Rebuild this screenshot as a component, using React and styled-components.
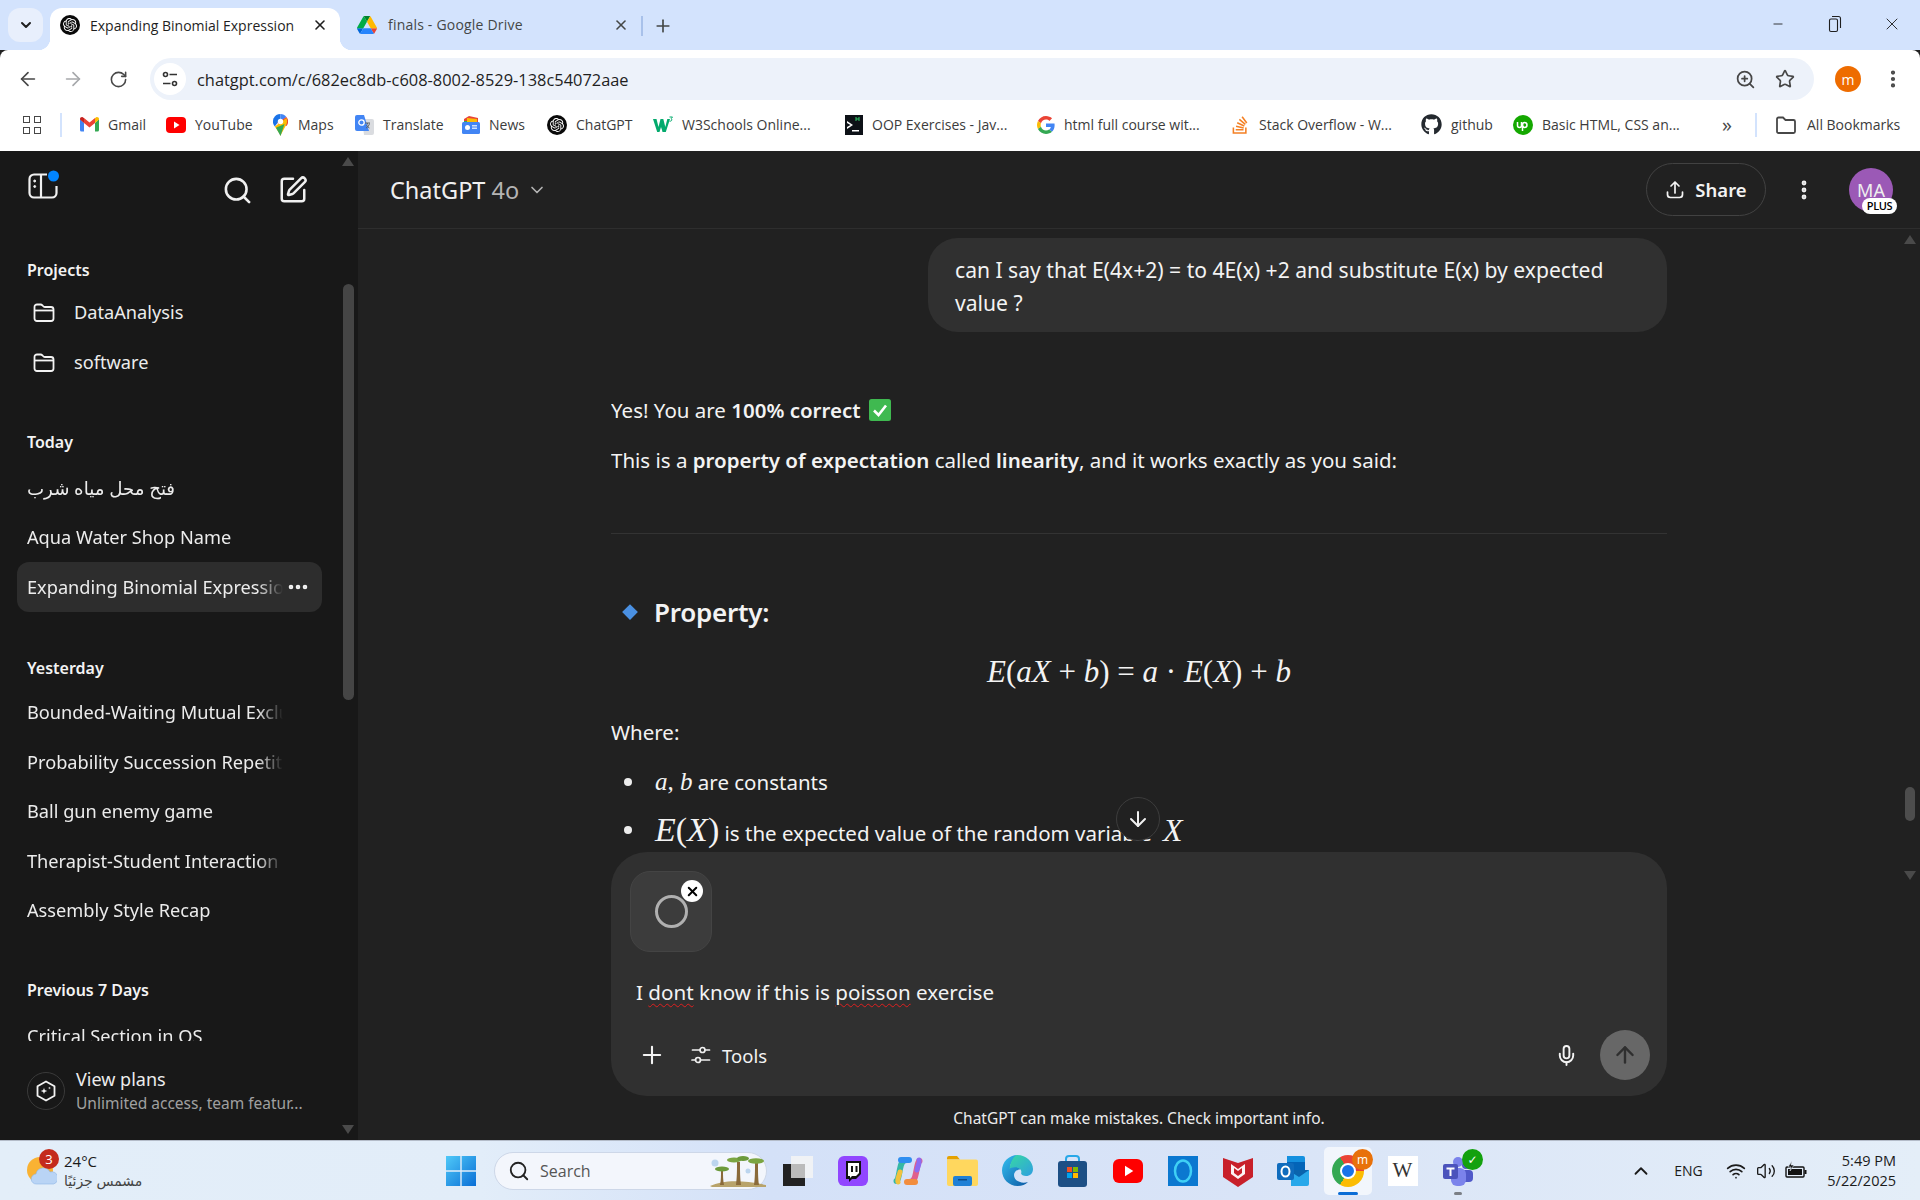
import styled, { createGlobalStyle } from "styled-components";
import {
  ArrowDown,
  ArrowLeft,
  ArrowRight,
  ArrowUp,
  ChevronDown,
  ChevronUp,
  EllipsisVertical,
  Mic,
  Minus,
  MoreHorizontal,
  Plus,
  RotateCw,
  Search,
  SquarePen,
  Star,
  Volume2,
  Wifi,
  X,
  ZoomIn,
} from "lucide-react";
import { SiOpenai } from "react-icons/si";
import { FaGithub, FaStackOverflow } from "react-icons/fa";

const Global = createGlobalStyle`
  html, body { margin: 0; padding: 0; height: 100%; background: #212121; }
  #root { height: 1200px; overflow: hidden; }
  * { box-sizing: border-box; }
`;

const UI = `"Open Sans", "DejaVu Sans", sans-serif`;
const CHAT = `"Noto Sans", "DejaVu Sans", sans-serif`;

const Page = styled.div`
  display: flex;
  flex-direction: column;
  width: 1920px;
  height: 1200px;
  font-family: ${UI};
`;

/* ---------- tab strip ---------- */
const TabStrip = styled.div`
  display: flex;
  align-items: flex-end;
  height: 50px;
  padding-left: 8px;
  background: #d3e3fd;
  color: #1f1f1f;
`;
const TabMenu = styled.div`
  display: flex;
  align-items: center;
  justify-content: center;
  width: 35px;
  height: 34px;
  margin: 0 7px 8px 0;
  border-radius: 12px;
  background: #e8effc;
`;
const Tab = styled.div`
  position: relative;
  display: flex;
  align-items: center;
  width: ${p => p.$w}px;
  height: 42px;
  padding: 0 12px 9px ${p => p.$left}px;
  border-radius: 12px 12px 0 0;
  background: ${p => (p.$active ? "#fff" : "transparent")};
  color: ${p => (p.$active ? "#1f1f1f" : "#444746")};
  ${p =>
    p.$active &&
    `
    padding-bottom: 8px;
    &::before, &::after {
      content: "";
      position: absolute;
      bottom: 0;
      width: 12px;
      height: 12px;
    }
    &::before { left: -12px; background: radial-gradient(circle at 0 0, transparent 12px, #fff 12.5px); }
    &::after { right: -12px; background: radial-gradient(circle at 100% 0, transparent 12px, #fff 12.5px); }
  `}
`;
const TabTitle = styled.span`
  flex: 1;
  margin-left: ${p => p.$gap ?? 10}px;
  font-size: 14px;
  letter-spacing: ${p => p.$track ?? 0}px;
  white-space: nowrap;
`;
const TabSep = styled.div`
  width: 2px;
  height: 20px;
  margin: 0 10px 14px 0;
  background: #a8c1ea;
`;
const NewTab = styled.div`
  display: flex;
  margin-bottom: 14px;
  color: #444746;
`;
const WindowButtons = styled.div`
  display: flex;
  margin: 0 0 14px auto;
`;
const WindowButton = styled.div`
  display: flex;
  align-items: center;
  justify-content: center;
  width: 57px;
  height: 24px;
`;

/* ---------- toolbar ---------- */
const Toolbar = styled.div`
  display: flex;
  align-items: center;
  height: 58px;
  padding-left: 5px;
  background: #fff;
  border-radius: 8px 8px 0 0;
`;
const NavButton = styled.div`
  display: flex;
  align-items: center;
  justify-content: center;
  width: 45.5px;
  color: ${p => (p.$off ? "#a6a8ab" : "#474747")};
`;
const Address = styled.div`
  display: flex;
  flex: 1;
  align-items: center;
  height: 42px;
  margin-left: 8.5px;
  padding: 0 9px 0 4px;
  border-radius: 21px;
  background: #edf2fa;
`;
const SiteInfo = styled.div`
  display: flex;
  align-items: center;
  justify-content: center;
  width: 32px;
  height: 32px;
  border-radius: 50%;
  background: #fff;
`;
const Url = styled.span`
  flex: 1;
  margin-left: 11px;
  font-size: 16.4px;
  color: #1f1f1f;
`;
const AddressAction = styled.div`
  display: flex;
  justify-content: center;
  width: 40px;
  color: #474747;
`;
const ProfileChip = styled.div`
  display: flex;
  align-items: center;
  justify-content: center;
  width: 26px;
  height: 26px;
  margin: 0 21px 0 21px;
  border-radius: 50%;
  background: #ee6c00;
  color: #fff;
  font-size: 14px;
`;
const MenuSlot = styled.div`
  display: flex;
  width: 38px;
  color: #474747;
`;

/* ---------- bookmarks ---------- */
const Bookmarks = styled.div`
  display: flex;
  align-items: center;
  height: 43px;
  padding: 0 0 10px 23px;
  background: #fff;
  color: #3c3c3c;
  font-size: 14px;
`;
const AppsIcon = styled.div`
  display: grid;
  grid-template-columns: 7px 7px;
  gap: 4px;
  width: 18px;
  span {
    height: 7px;
    border: 1.5px solid #474747;
  }
`;
const BarSep = styled.div`
  width: 2px;
  height: 24px;
  margin: ${p => p.$m};
  background: #d3e3fd;
`;
const Bookmark = styled.div`
  display: flex;
  align-items: center;
  gap: 9px;
  width: ${p => p.$w}px;
  white-space: nowrap;
`;
const BookmarkIcon = styled.span`
  display: flex;
  flex: 0 0 18px;
  align-items: center;
  justify-content: center;
`;
const More = styled.span`
  width: 37px;
  padding-left: 4px;
  font-size: 20px;
  color: #474747;
`;
const AllBookmarks = styled.div`
  display: flex;
  align-items: center;
  gap: 11px;
  white-space: nowrap;
`;

/* ---------- app ---------- */
const Main = styled.div`
  display: flex;
  height: 989px;
`;
const Sidebar = styled.aside`
  position: relative;
  display: flex;
  flex-direction: column;
  width: 358px;
  background: #181818;
  color: #ececec;
  font-family: ${CHAT};
`;
const SideTop = styled.div`
  display: flex;
  align-items: center;
  flex: 0 0 78px;
  padding: 0 50px 0 28px;
  color: #f0f0f0;
`;
const LogoSvg = styled.svg`
  margin-bottom: 8px;
  overflow: visible;
`;
const SideActions = styled.div`
  display: flex;
  gap: 25px;
  margin-left: auto;
`;
const SideNav = styled.nav`
  flex: 1;
  overflow: hidden;
`;
const SideLabel = styled.div`
  margin: ${p => p.$top}px 0 ${p => p.$bottom}px 27px;
  font-size: 16px;
  font-weight: 600;
  line-height: 24px;
  color: #f3f3f3;
`;
const SideRow = styled.div`
  display: flex;
  align-items: center;
  gap: 19px;
  height: 50px;
  padding-left: 33px;
  font-size: 18.2px;
`;
const ChatRow = styled.div`
  position: relative;
  display: flex;
  align-items: center;
  width: 305px;
  height: 49.5px;
  margin-left: 17px;
  padding-left: 10px;
  border-radius: 12px;
  background: ${p => (p.$active ? "#2d2d2d" : "transparent")};
  font-size: 18.2px;
  white-space: nowrap;
`;
const ChatTitle = styled.span`
  display: block;
  overflow: hidden;
  width: 256px;
  mask-image: linear-gradient(to right, #000 90%, transparent 100%);
`;
const RowMenu = styled.span`
  position: absolute;
  right: 12px;
  top: 13px;
  display: flex;
  color: #f5f5f5;
`;
const SideFooter = styled.div`
  display: flex;
  align-items: center;
  flex: 0 0 99px;
  gap: 11px;
  padding: 0 0 0 27px;
`;
const PlanBadge = styled.div`
  display: flex;
  align-items: center;
  justify-content: center;
  width: 38px;
  height: 38px;
  border: 1px solid #3a3a3a;
  border-radius: 50%;
`;
const PlanTitle = styled.div`
  font-size: 18px;
  line-height: 24px;
`;
const PlanSub = styled.div`
  font-size: 15.5px;
  line-height: 24px;
  color: #a0a0a0;
`;
const ScrollArrow = styled.div`
  position: absolute;
  ${p => p.$pos};
  width: 0;
  height: 0;
  border-left: 6px solid transparent;
  border-right: 6px solid transparent;
  ${p => (p.$down ? "border-top" : "border-bottom")}: 9px solid ${p => p.$color};
`;
const ScrollThumb = styled.div`
  position: absolute;
  ${p => p.$pos};
  border-radius: 6px;
  background: ${p => p.$color};
`;

const Content = styled.section`
  position: relative;
  display: flex;
  flex: 1;
  flex-direction: column;
  background: #212121;
  color: #f3f3f3;
  font-family: ${CHAT};
`;
const Header = styled.header`
  display: flex;
  align-items: center;
  flex: 0 0 78px;
  padding: 0 27px 0 32px;
  border-bottom: 1px solid #2e2e2e;
`;
const ModelName = styled.div`
  display: flex;
  align-items: center;
  gap: 8px;
  font-size: 23.5px;
  color: #f0f0f0;
  em {
    font-style: normal;
    color: #b4b4b4;
  }
`;
const ShareButton = styled.div`
  display: flex;
  align-items: center;
  justify-content: center;
  gap: 10px;
  width: 120px;
  height: 53px;
  margin-left: auto;
  border: 1px solid #424242;
  border-radius: 27px;
  font-size: 18.5px;
  font-weight: 600;
`;
const HeaderMenu = styled.div`
  display: flex;
  margin: 0 33px 0 26px;
  color: #f0f0f0;
`;
const Avatar = styled.div`
  position: relative;
  display: flex;
  align-items: center;
  justify-content: center;
  width: 44px;
  height: 44px;
  border-radius: 50%;
  background: #9b59b6;
  color: #eee;
  font-size: 18px;
`;
const PlusBadge = styled.span`
  position: absolute;
  right: -4px;
  bottom: -2px;
  display: flex;
  align-items: center;
  justify-content: center;
  width: 35px;
  height: 16px;
  border-radius: 8px;
  background: #fff;
  color: #000;
  font-size: 11px;
  font-family: ${UI};
  font-weight: 600;
  letter-spacing: -0.4px;
`;
const Column = styled.div`
  display: flex;
  flex: 1;
  flex-direction: column;
  width: 1056px;
  margin: 0 auto;
`;
const Thread = styled.div`
  display: flex;
  flex-direction: column;
  flex: 0 0 623px;
  padding-top: 9px;
  overflow: hidden;
  font-size: 20.5px;
  line-height: 33px;
  > * {
    flex-shrink: 0;
  }
`;
const Bubble = styled.div`
  align-self: flex-end;
  width: 739px;
  height: 94px;
  padding: 15px 27px 0 27px;
  border-radius: 30px;
  background: #303030;
  font-size: 21.1px;
`;
const Para = styled.p`
  margin: ${p => p.$top}px 0 0;
  b {
    font-weight: 600;
  }
`;
const CheckEmoji = styled.svg`
  margin-left: 7px;
  vertical-align: -4px;
`;
const Rule = styled.hr`
  width: 100%;
  height: 1px;
  margin: 56px 0 0;
  border: 0;
  background: #333;
`;
const Heading = styled.h3`
  display: flex;
  align-items: center;
  gap: 15px;
  margin: 60px 0 0 10px;
  font-size: 26px;
  line-height: 36px;
  font-weight: 600;
  letter-spacing: -0.25px;
`;
const Formula = styled.div`
  display: flex;
  justify-content: center;
  height: 44px;
  margin-top: 20px;
  font-size: 31px;
  line-height: 44px;
`;
const MathText = styled.span`
  margin-left: ${p => p.$ml ?? 0}px;
  font-family: "Liberation Serif", serif;
  font-style: ${p => (p.$up ? "normal" : "italic")};
  white-space: pre;
  font-size: ${p => p.$size || "inherit"};
`;
const List = styled.ul`
  margin: 16px 0 0;
  padding: 0;
  list-style: none;
`;
const Item = styled.li`
  position: relative;
  height: 33px;
  margin-bottom: 15px;
  padding-left: 44px;
  white-space: nowrap;
  &::before {
    content: "";
    position: absolute;
    left: 13px;
    top: 13px;
    width: 8px;
    height: 8px;
    border-radius: 50%;
    background: #ececec;
  }
`;
const ScrollDown = styled.div`
  position: absolute;
  left: 758px;
  top: 646px;
  display: flex;
  align-items: center;
  justify-content: center;
  width: 44px;
  height: 44px;
  border: 1px solid #3d3d3d;
  border-radius: 50%;
  background: #212121;
  color: #f0f0f0;
`;
const Composer = styled.div`
  display: flex;
  flex-direction: column;
  flex: 0 0 244px;
  padding: 19px 17px 0 19px;
  border-radius: 36px;
  background: #303030;
`;
const Attachment = styled.div`
  position: relative;
  display: flex;
  align-items: center;
  justify-content: center;
  width: 82px;
  height: 81px;
  border: 1px solid #444;
  border-radius: 20px;
  background: #3c3c3c;
`;
const Ring = styled.div`
  width: 33px;
  height: 33px;
  border: 3px solid #b0b0b0;
  border-radius: 50%;
`;
const RemoveBadge = styled.span`
  position: absolute;
  right: 8px;
  top: 8px;
  display: flex;
  align-items: center;
  justify-content: center;
  width: 22px;
  height: 22px;
  border-radius: 50%;
  background: #fff;
  color: #000;
`;
const Prompt = styled.div`
  margin: 24px 0 0 6px;
  font-size: 20.6px;
  line-height: 33px;
`;
const Typo = styled.span`
  text-decoration: underline wavy #e02020 1px;
  text-underline-offset: 3px;
`;
const ComposerBar = styled.div`
  display: flex;
  align-items: center;
  margin-top: 21px;
`;
const AddSlot = styled.div`
  display: flex;
  margin-left: 8px;
`;
const ToolsButton = styled.div`
  display: flex;
  align-items: center;
  gap: 11px;
  margin-left: 25px;
  font-size: 18.5px;
`;
const MicSlot = styled.div`
  display: flex;
  margin-left: auto;
  margin-right: 22px;
`;
const SendButton = styled.div`
  display: flex;
  align-items: center;
  justify-content: center;
  width: 50px;
  height: 50px;
  border-radius: 50%;
  background: #676767;
  color: #2f2f2f;
`;
const Disclaimer = styled.div`
  flex: 1;
  font-size: 15.5px;
  line-height: 44px;
  text-align: center;
  color: #ececec;
`;

/* ---------- taskbar ---------- */
const Taskbar = styled.footer`
  display: flex;
  align-items: center;
  height: 60px;
  border-top: 1px solid #b4bcc9;
  background: linear-gradient(90deg, #e3eef9 0%, #e2edf9 25%, #d4e1f8 40%, #d9e4f7 65%, #e4eef8 100%);
  color: #1b1b1b;
  font-family: ${UI};
`;
const Weather = styled.div`
  position: relative;
  display: flex;
  align-items: center;
  width: 434px;
  padding-left: 27px;
`;
const WeatherBadge = styled.span`
  position: absolute;
  left: 39px;
  top: -2px;
  display: flex;
  align-items: center;
  justify-content: center;
  width: 20px;
  height: 20px;
  border-radius: 50%;
  background: #c42b1c;
  color: #fff;
  font-size: 13px;
`;
const WeatherText = styled.div`
  margin-left: 7px;
  font-size: 15px;
  line-height: 20px;
  span {
    display: block;
    color: #444;
    font-size: 14px;
  }
`;
const TaskSlot = styled.div`
  position: relative;
  display: flex;
  align-items: center;
  justify-content: center;
  width: ${p => p.$w ?? 55}px;
  height: 48px;
`;
const ActiveBack = styled.div`
  position: absolute;
  left: 3.5px;
  top: 0;
  width: 48px;
  height: 48px;
  border-radius: 5px;
  background: rgba(255, 255, 255, 0.65);
`;
const TaskBar = styled.span`
  position: absolute;
  bottom: 0;
  left: 50%;
  width: ${p => p.$w}px;
  height: 3px;
  margin-left: ${p => -p.$w / 2}px;
  border-radius: 2px;
  background: ${p => p.$color};
`;
const TaskBadge = styled.span`
  position: absolute;
  right: 2px;
  top: 2px;
  display: flex;
  align-items: center;
  justify-content: center;
  width: 21px;
  height: 21px;
  border-radius: 50%;
  background: ${p => p.$color};
  color: #fff;
  font-size: 12px;
`;
const SearchPill = styled.div`
  display: flex;
  align-items: center;
  width: 273px;
  height: 38px;
  margin: 0 3px 0 6px;
  padding-left: 13px;
  border: 1px solid #cdd7e8;
  border-radius: 19px;
  background: #f3f6fc;
  color: #555;
  font-size: 16px;
`;
const SearchText = styled.span`
  flex: 1;
  margin-left: 10px;
`;
const Tray = styled.div`
  display: flex;
  align-items: center;
  margin-left: auto;
  padding-right: 24px;
`;
const TraySlot = styled.div`
  display: flex;
  align-items: center;
  justify-content: center;
  width: ${p => p.$w}px;
  padding-right: ${p => p.$pr ?? 0}px;
  font-size: 14px;
`;
const Clock = styled.div`
  width: 85px;
  font-size: 14.5px;
  line-height: 20px;
  text-align: right;
`;

/* ---------- drawings ---------- */
const GptMark = styled.span`
  display: flex;
  flex: none;
  align-items: center;
  justify-content: center;
  width: ${p => p.$size}px;
  height: ${p => p.$size}px;
  border-radius: 50%;
  background: #0a0a0a;
  color: #fff;
`;
const Gpt = ({ size = 20 }) => (
  <GptMark $size={size}>
    <SiOpenai size={size - 6} />
  </GptMark>
);

const Drive = () => (
  <svg width="20" height="18" viewBox="0 0 87.3 78">
    <path d="m6.6 66.85 3.85 6.65c.8 1.4 1.95 2.5 3.3 3.3l13.75-23.8h-27.5c0 1.55.4 3.1 1.2 4.5z" fill="#0066da" />
    <path d="m43.65 25-13.75-23.8c-1.35.8-2.5 1.9-3.3 3.3l-25.4 44a9.06 9.06 0 0 0 -1.2 4.5h27.5z" fill="#00ac47" />
    <path d="m73.55 76.8c1.35-.8 2.5-1.9 3.3-3.3l1.6-2.75 7.65-13.25c.8-1.4 1.2-2.95 1.2-4.5h-27.502l5.852 11.5z" fill="#ea4335" />
    <path d="m43.65 25 13.75-23.8c-1.35-.8-2.9-1.2-4.5-1.2h-18.5c-1.6 0-3.15.45-4.5 1.2z" fill="#00832d" />
    <path d="m59.8 53h-32.3l-13.75 23.8c1.35.8 2.9 1.2 4.5 1.2h50.8c1.6 0 3.15-.45 4.5-1.2z" fill="#2684fc" />
    <path d="m73.4 26.5-12.7-22c-.8-1.4-1.95-2.5-3.3-3.3l-13.75 23.8 16.15 28h27.45c0-1.55-.4-3.1-1.2-4.5z" fill="#ffba00" />
  </svg>
);
const Tune = () => (
  <svg width="18" height="18" viewBox="0 0 18 18" fill="none" stroke="#333" strokeWidth="1.6">
    <circle cx="4.5" cy="4.5" r="2" />
    <path d="M8.5 4.5H16M2 13.5h7.5" />
    <circle cx="13.5" cy="13.5" r="2" />
  </svg>
);
const Restore = () => (
  <svg width="14" height="18" viewBox="0 0 14 18" fill="none" stroke="#1f1f1f" strokeWidth="1.1">
    <rect x="1.5" y="4" width="8" height="12.5" rx="1.5" />
    <path d="M4 1.5h6.5a2 2 0 0 1 2 2V13" />
  </svg>
);
const Gmail = () => (
  <svg width="19" height="15" viewBox="0 0 19 15">
    <path d="M0 2v11a1.5 1.5 0 0 0 1.5 1.5H4V6z" fill="#4285f4" />
    <path d="M15 14.5h2.5A1.5 1.5 0 0 0 19 13V2l-4 4z" fill="#34a853" />
    <path d="M15 1v5l4-3.5V2c0-1.6-2-2.4-3-1.5z" fill="#fbbc04" />
    <path d="M4 6V1l5.500 4.500L15 1v5l-5.500 4.500z" fill="#ea4335" />
    <path d="M0 2v.5L4 6V1L3 .5C2-.4 0 .4 0 2z" fill="#c5221f" />
  </svg>
);
const Youtube = ({ size = 20 }) => (
  <svg width={size} height={size * 0.8} viewBox="0 0 20 16">
    <rect width="20" height="16" rx="4" fill="#f00" />
    <path d="M8 4.500 13.500 8 8 11.500z" fill="#fff" />
  </svg>
);
const Maps = () => (
  <svg width="15" height="22" viewBox="0 0 15 22">
    <path d="M7.500 0A7.500 7.500 0 0 0 1.800 12.400L7.500 5z" fill="#1a73e8" />
    <path d="M7.500 0c2.400 0 4.500 1.100 5.900 2.900L7.500 7.500z" fill="#4285f4" />
    <path d="M13.400 2.900A7.500 7.500 0 0 1 13.500 12L4 9z" fill="#ea4335" />
    <path d="M1.800 12.400 13.500 4c1 2 .8 5-.500 7.200L8 20.500 7.500 22l-1-2.500z" fill="#fbbc04" />
    <path d="M3 13.800 11.500 10 7.500 22z" fill="#34a853" />
    <circle cx="7.500" cy="7.500" r="2.700" fill="#fff" />
  </svg>
);
const Translate = () => (
  <svg width="19" height="20" viewBox="0 0 19 20">
    <path d="M7 4h10a2 2 0 0 1 2 2v12a2 2 0 0 1-2 2H9z" fill="#dadce0" />
    <path d="M2 0h7l5 16H2a2 2 0 0 1-2-2V2a2 2 0 0 1 2-2z" fill="#4285f4" />
    <path d="M10 8 15 8M12.500 8v1.500M11 13c2-1 3-2.500 3.500-4.500M11.500 10c.6 1.200 1.600 2.300 3 3" stroke="#5f6368" fill="none" strokeWidth="1" />
    <circle cx="6.500" cy="7.500" r="2.700" fill="none" stroke="#fff" strokeWidth="1.300" />
  </svg>
);
const News = () => (
  <svg width="18" height="18" viewBox="0 0 18 18">
    <path d="M2 3 7 0l9 2v4H2z" fill="#ea4335" />
    <path d="M5 2l10 1v4H5z" fill="#fbbc04" />
    <path d="M2 5h3v4H2z" fill="#34a853" />
    <rect y="6" width="18" height="12" rx="1.500" fill="#4285f4" />
    <rect x="3" y="9" width="5" height="5" rx="2.500" fill="#fff" />
    <path d="M10 9h5v1.400h-5zM10 11.500h5v1.400h-5z" fill="#cfe0fc" />
  </svg>
);
const W3 = () => (
  <svg width="20" height="18" viewBox="0 0 20 18">
    <path d="M0 3h3.500l2 8 2-8h2.800l2 8 2-8H17L12.800 16h-3.300L9 14 8 11 6.500 16H4.200z" fill="#04aa6d" />
    <path d="M16.500 1h3l-1.400 1.700c1.300.4 1 2.800-1.600 2.500" stroke="#04aa6d" fill="none" strokeWidth="1" />
  </svg>
);
const Terminal = () => (
  <svg width="18" height="20" viewBox="0 0 18 20">
    <rect width="18" height="20" fill="#0d1117" />
    <path d="M2 6 8 10 2 14V12L5.500 10 2 8zM7 15h7v1.500H7z" fill="#fff" />
    <path d="M11 2v4M14 2v4M11 4h3" stroke="#2ec866" fill="none" strokeWidth="1" />
  </svg>
);
const Google = () => (
  <svg width="18" height="18" viewBox="0 0 48 48">
    <path fill="#EA4335" d="M24 9.500c3.540 0 6.710 1.220 9.210 3.600l6.850-6.850C35.900 2.380 30.470 0 24 0 14.620 0 6.510 5.380 2.560 13.220l7.980 6.190C12.430 13.720 17.740 9.500 24 9.500z" />
    <path fill="#4285F4" d="M46.980 24.550c0-1.570-.15-3.090-.38-4.550H24v9.020h12.940c-.58 2.960-2.260 5.480-4.780 7.180l7.730 6c4.510-4.180 7.090-10.360 7.090-17.650z" />
    <path fill="#FBBC05" d="M10.530 28.590c-.48-1.450-.76-2.990-.76-4.590s.27-3.140.76-4.590l-7.980-6.190C.92 16.460 0 20.120 0 24c0 3.880.92 7.540 2.560 10.780l7.970-6.190z" />
    <path fill="#34A853" d="M24 48c6.480 0 11.930-2.130 15.890-5.810l-7.730-6c-2.150 1.450-4.920 2.300-8.160 2.300-6.260 0-11.570-4.220-13.470-9.910l-7.980 6.190C6.510 42.620 14.620 48 24 48z" />
  </svg>
);
const Upwork = () => (
  <svg width="20" height="20" viewBox="0 0 20 20">
    <circle cx="10" cy="10" r="10" fill="#14a800" />
    <path d="M4.500 7v3.500a2 2 0 0 0 4 0V7M8.500 7.500c1 3 2 5 3 5a2.500 2.500 0 0 0 0-5c-1.500 0-2 1.500-2 3V16" stroke="#fff" fill="none" strokeWidth="1.500" />
  </svg>
);
const BookmarkFolder = () => (
  <svg width="20" height="18" viewBox="0 0 20 18" fill="none" stroke="#474747" strokeWidth="1.800">
    <path d="M1 3a1.500 1.500 0 0 1 1.500-1.500H7L9.500 4h8A1.500 1.500 0 0 1 19 5.500v10a1.500 1.500 0 0 1-1.500 1.500h-15A1.500 1.500 0 0 1 1 15.500z" />
  </svg>
);
const SidebarLogo = () => (
  <LogoSvg width="30" height="26" viewBox="0 0 30 26" fill="none" stroke="#f0f0f0" strokeWidth="2.200">
    <path d="M19 1.500H6A4.500 4.500 0 0 0 1.500 6v14A4.500 4.500 0 0 0 6 24.500h18a4.500 4.500 0 0 0 4.500-4.500v-7" />
    <path d="M13 1.500v23" />
    <circle cx="6.700" cy="8" r="1" fill="#f0f0f0" strokeWidth="1" />
    <circle cx="6.700" cy="13.500" r="1" fill="#f0f0f0" strokeWidth="1" />
    <circle cx="25.500" cy="3" r="5.500" fill="#0285ff" stroke="none" />
  </LogoSvg>
);
const ProjectFolder = () => (
  <svg width="22" height="19" viewBox="0 0 22 19" fill="none" stroke="#f3f3f3" strokeWidth="1.800">
    <path d="M1.500 4a2.500 2.500 0 0 1 2.500-2.500h3.500c1 0 1.500.5 2.200 1.200.6.700 1.100 1.300 2.100 1.300H18a2.500 2.500 0 0 1 2.500 2.500v9A2.500 2.500 0 0 1 18 18H4a2.500 2.500 0 0 1-2.500-2.500z" />
    <path d="M1.500 7.500h19" />
  </svg>
);
const PlanIcon = () => (
  <svg width="24" height="24" viewBox="0 0 24 24" fill="none" stroke="#f3f3f3" strokeWidth="1.800" strokeLinejoin="round">
    <path d="M12 2.500 20.500 7.300v9.400L12 21.500l-8.500-4.800V7.300z" />
    <path d="M10 8.500c.3 2.300 1 3 3.300 3.400-2.300.4-3 1.100-3.300 3.400-.3-2.300-1-3-3.300-3.400 2.300-.4 3-1.100 3.300-3.400z" fill="#f3f3f3" stroke="none" />
    <path d="M15.500 7.500c.1 1 .5 1.400 1.500 1.500-1 .1-1.400.5-1.500 1.500-.1-1-.5-1.400-1.500-1.500 1-.1 1.400-.5 1.500-1.500z" fill="#f3f3f3" stroke="none" />
  </svg>
);
const ShareIcon = () => (
  <svg width="20" height="20" viewBox="0 0 20 20" fill="none" stroke="#f3f3f3" strokeWidth="1.700" strokeLinecap="round" strokeLinejoin="round">
    <path d="M10 13V2.500M6 6l4-4 4 4" />
    <path d="M2.500 12v2.500a3 3 0 0 0 3 3h9a3 3 0 0 0 3-3V12" />
  </svg>
);
const ToolsIcon = () => (
  <svg width="20" height="20" viewBox="0 0 20 20" fill="none" stroke="#f0f0f0" strokeWidth="1.700" strokeLinecap="round">
    <circle cx="11.500" cy="5" r="2.500" />
    <circle cx="7" cy="15" r="2.500" />
    <path d="M1.500 5H9M14 5h4.500M1 15h3.500M9.500 15h9" />
  </svg>
);
const Diamond = () => (
  <svg width="18" height="18" viewBox="0 0 16 16">
    <path d="M8 1 15 8 8 15 1 8z" fill="#4a90e2" />
  </svg>
);
const Cloud = () => (
  <svg width="30" height="28" viewBox="0 0 30 28">
    <circle cx="13" cy="13" r="13" fill="#f9b233" />
    <path d="M7 27a5 5 0 0 1-.5-10 7.500 7.500 0 0 1 14-2 6 6 0 0 1 3.500 12z" transform="translate(2.500 0)" fill="#b9d4f5" stroke="#8fb5e6" strokeWidth=".6" />
  </svg>
);
const Start = () => (
  <svg width="30" height="30" viewBox="0 0 30 30">
    <defs>
      <linearGradient id="win" x1="0" y1="0" x2="1" y2="1">
        <stop offset="0" stopColor="#4fc9f8" />
        <stop offset="1" stopColor="#0a6fd6" />
      </linearGradient>
    </defs>
    <path d="M0 0h14.300v14.300H0zM15.700 0H30v14.300H15.700zM0 15.700h14.300V30H0zM15.700 15.700H30V30H15.700z" fill="url(#win)" />
  </svg>
);
const Baobabs = () => (
  <svg width="56" height="32" viewBox="0 0 56 32">
    <path d="M0 31c12-5 28-7 56-1v2H2z" fill="#b8a36a" />
    <path d="M10 30c1-5 1-9 1-14h2c0 5 0 9 1 14zM26 30c1-8 1-14 1-23h3c0 9 0 15 1 23zM44 30c1-7 1-13 1-22h3c0 9 0 15 1 22z" fill="#8a6a3a" />
    <ellipse cx="12" cy="14" rx="7" ry="2.500" fill="#6c9a3b" />
    <ellipse cx="24" cy="5" rx="7" ry="2.500" fill="#7ba542" />
    <ellipse cx="33" cy="3.500" rx="6" ry="2.500" fill="#6c9a3b" />
    <ellipse cx="46" cy="6" rx="8" ry="2.800" fill="#7ba542" />
    <circle cx="5" cy="8" r="3.500" fill="#bcd5ee" />
    <circle cx="38" cy="16" r="2.500" fill="#bcd5ee" />
  </svg>
);
const TaskView = () => (
  <svg width="32" height="32" viewBox="0 0 32 32">
    <rect x="1" y="9" width="22" height="22" fill="#222" />
    <rect x="9" y="1" width="22" height="22" fill="#f4f4f4" opacity=".85" />
    <rect x="9" y="9" width="14" height="14" fill="#bbb" />
  </svg>
);
const Twitch = () => (
  <svg width="30" height="30" viewBox="0 0 30 30">
    <rect width="30" height="30" rx="6" fill="#9146ff" />
    <path d="M8 5h15v13l-5 5h-4l-3 3v-3H8z" fill="#111" />
    <path d="M10 7h11v10l-3 3h-4l-2 2v-2h-2z" fill="#fff" />
    <path d="M13 10h2v6h-2zM17.500 10h2v6h-2z" fill="#111" />
  </svg>
);
const Copilot = () => (
  <svg width="30" height="30" viewBox="0 0 30 30" fill="none" strokeLinecap="round">
    <path d="M14 4C9 4 8 8 7 13S5 25 3.500 25" stroke="#35b8a6" strokeWidth="6" />
    <path d="M8 4h8" stroke="#2f8ef0" strokeWidth="6" />
    <path d="M16 26c5 0 6-4 7-9s2-12 3.500-12" stroke="#e0608c" strokeWidth="6" />
    <path d="M22 26h-8" stroke="#f28d3e" strokeWidth="6" />
    <path d="M5 26c-1-2 1-6 2-10" stroke="#f2c23e" strokeWidth="5" />
    <path d="M26 4c1 2-1 6-2 10" stroke="#8c6cf2" strokeWidth="5" />
  </svg>
);
const Explorer = () => (
  <svg width="31" height="30" viewBox="0 0 31 30">
    <path d="M0 2a2 2 0 0 1 2-2h8l3 3.500h-13z" fill="#e5a100" />
    <path d="M0 3.500h29a2 2 0 0 1 2 2V28a2 2 0 0 1-2 2H2a2 2 0 0 1-2-2z" fill="#ffd75e" />
    <rect x="6" y="20" width="19" height="10" rx="2" fill="#1f80d6" />
    <rect x="11" y="23" width="9" height="1.500" fill="#0c4a86" />
  </svg>
);
const Edge = () => (
  <svg width="31" height="31" viewBox="0 0 31 31">
    <defs>
      <linearGradient id="edgeA" x1="0" y1="0" x2="1" y2="1">
        <stop offset="0" stopColor="#35c1f1" />
        <stop offset="1" stopColor="#0c59a4" />
      </linearGradient>
      <linearGradient id="edgeB" x1="0" y1="0" x2="1" y2="1">
        <stop offset="0" stopColor="#37d9a3" />
        <stop offset="1" stopColor="#2f9fe0" />
      </linearGradient>
    </defs>
    <path d="M15.500 0C7 0 0 7 0 15.500S7 31 15.500 31c4.500 0 8-1.500 10.500-4-6 2-14-.5-14-7 0-3 3-5.500 6-5.500 0-6-7-6-10-3C10 5 15 0 15.500 0z" fill="url(#edgeA)" />
    <path d="M15.500 0C24 0 31 6.500 31 14c0 4.500-3 7-7 7-2.500 0-5-1-5-3 1-1 0-4-2.500-5-4-1.500-8 0-9 1 1-8 5-14 8-14z" fill="url(#edgeB)" />
  </svg>
);
const Store = () => (
  <svg width="29" height="32" viewBox="0 0 29 32">
    <path d="M8 7V4a3 3 0 0 1 3-3h7a3 3 0 0 1 3 3v3" fill="none" stroke="#29a8e8" strokeWidth="2" />
    <rect y="6" width="29" height="26" rx="3" fill="#1d4f85" />
    <path d="M9 12h5v5H9z" fill="#f25022" />
    <path d="M15 12h5v5h-5z" fill="#7fba00" />
    <path d="M9 18h5v5H9z" fill="#00a4ef" />
    <path d="M15 18h5v5h-5z" fill="#ffb900" />
  </svg>
);
const Alexa = () => (
  <svg width="30" height="30" viewBox="0 0 30 30">
    <rect width="30" height="30" fill="#0b78d0" />
    <ellipse cx="15" cy="15" rx="8" ry="10.500" fill="none" stroke="#3fd0f5" strokeWidth="2.500" />
  </svg>
);
const McAfee = () => (
  <svg width="30" height="32" viewBox="0 0 30 32">
    <path d="M0 3 15 8 30 3v19L15 32 0 22z" fill="#c8202a" />
    <path d="M8 9l7 5 7-5v10l-7 5-7-5z" fill="#fff" opacity=".95" />
    <path d="M11 13l4 3 4-3v5l-4 3-4-3z" fill="#c8202a" />
  </svg>
);
const Outlook = () => (
  <svg width="32" height="30" viewBox="0 0 32 30">
    <path d="M10 0h16a2 2 0 0 1 2 2v12H10z" fill="#1490df" />
    <path d="M10 6h18v8H10z" fill="#0364b8" />
    <path d="M14 14h18v14a2 2 0 0 1-2 2H14z" fill="#28a8ea" />
    <path d="M32 14 22 21l-8-5v-2z" fill="#0a64ad" />
    <rect y="7" width="17" height="17" rx="2" fill="#0f6cbd" />
    <ellipse cx="8.500" cy="15.500" rx="4" ry="5" fill="none" stroke="#fff" strokeWidth="2" />
  </svg>
);
const ChromeBall = styled.div`
  position: relative;
  width: 32px;
  height: 32px;
  border-radius: 50%;
  background: conic-gradient(#ea4335 0 90deg, #fbbc04 90deg 210deg, #34a853 210deg 330deg, #ea4335 330deg);
  &::after {
    content: "";
    position: absolute;
    inset: 8px;
    border: 2px solid #fff;
    border-radius: 50%;
    background: #1a73e8;
  }
`;
const Wiki = styled.div`
  display: flex;
  align-items: center;
  justify-content: center;
  width: 30px;
  height: 30px;
  background: #fff;
  color: #333;
  font-family: "Liberation Serif", serif;
  font-size: 21px;
`;
const Teams = () => (
  <svg width="30" height="30" viewBox="0 0 30 30">
    <circle cx="23" cy="9" r="4" fill="#5059c9" />
    <rect x="18" y="14" width="12" height="12" rx="4" fill="#5059c9" />
    <circle cx="15" cy="6" r="5" fill="#7b83eb" />
    <rect x="8" y="12" width="15" height="18" rx="6" fill="#7b83eb" />
    <rect y="8" width="15" height="15" rx="2" fill="#4b53bc" />
    <path d="M3.500 11.500h8v2h-3V20h-2v-6.500h-3z" fill="#fff" />
  </svg>
);
const Battery = () => (
  <svg width="22" height="20" viewBox="0 0 22 20">
    <path d="M2 6h16a1 1 0 0 1 1 1v8a1 1 0 0 1-1 1H2a1 1 0 0 1-1-1V7a1 1 0 0 1 1-1z" fill="none" stroke="#111" strokeWidth="1.400" />
    <rect x="3" y="8" width="14" height="6" fill="#111" />
    <rect x="19.500" y="9" width="2" height="4" fill="#111" />
    <path d="M7 0 3 6h3l-1 4 4-6H6z" fill="#111" stroke="#e4eef8" strokeWidth=".6" />
  </svg>
);

const bookmarks = [
  { w: 86, icon: <Gmail />, label: "Gmail" },
  { w: 105, icon: <Youtube />, label: "YouTube" },
  { w: 84, icon: <Maps />, label: "Maps" },
  { w: 107, icon: <Translate />, label: "Translate" },
  { w: 85, icon: <News />, label: "News" },
  { w: 106, icon: <Gpt size={20} />, label: "ChatGPT" },
  { w: 192, icon: <W3 />, label: "W3Schools Online..." },
  { w: 192, icon: <Terminal />, label: "OOP Exercises - Jav..." },
  { w: 193, icon: <Google />, label: "html full course wit..." },
  { w: 191, icon: <FaStackOverflow size={20} color="#f48024" />, label: "Stack Overflow - W..." },
  { w: 92, icon: <FaGithub size={21} color="#24292f" />, label: "github" },
  { w: 205, icon: <Upwork />, label: "Basic HTML, CSS an..." },
];

const today = ["فتح محل مياه شرب", "Aqua Water Shop Name"];
const yesterday = [
  "Bounded-Waiting Mutual Exclusion",
  "Probability Succession Repetition",
  "Ball gun enemy game",
  "Therapist-Student Interaction",
  "Assembly Style Recap",
];

export default function App() {
  return (
    <Page>
      <Global />
      <TabStrip>
        <TabMenu>
          <ChevronDown size={16} strokeWidth={3} />
        </TabMenu>
        <Tab $active $w={290} $left={10}>
          <Gpt size={20} />
          <TabTitle>Expanding Binomial Expression</TabTitle>
          <X size={16} strokeWidth={2.4} />
        </Tab>
        <Tab $w={301} $left={17}>
          <Drive />
          <TabTitle $gap={11} $track={0.2}>finals - Google Drive</TabTitle>
          <X size={16} strokeWidth={2.4} />
        </Tab>
        <TabSep />
        <NewTab>
          <Plus size={20} strokeWidth={2} />
        </NewTab>
        <WindowButtons>
          <WindowButton>
            <Minus size={14} strokeWidth={1.5} />
          </WindowButton>
          <WindowButton>
            <Restore />
          </WindowButton>
          <WindowButton>
            <X size={20} strokeWidth={1.1} />
          </WindowButton>
        </WindowButtons>
      </TabStrip>

      <Toolbar>
        <NavButton>
          <ArrowLeft size={22} strokeWidth={1.8} />
        </NavButton>
        <NavButton $off>
          <ArrowRight size={22} strokeWidth={1.8} />
        </NavButton>
        <NavButton>
          <RotateCw size={19} strokeWidth={2} />
        </NavButton>
        <Address>
          <SiteInfo>
            <Tune />
          </SiteInfo>
          <Url>chatgpt.com/c/682ec8db-c608-8002-8529-138c54072aae</Url>
          <AddressAction>
            <ZoomIn size={21} strokeWidth={2} />
          </AddressAction>
          <AddressAction>
            <Star size={20} strokeWidth={2} />
          </AddressAction>
        </Address>
        <ProfileChip>m</ProfileChip>
        <MenuSlot>
          <EllipsisVertical size={22} strokeWidth={2.6} />
        </MenuSlot>
      </Toolbar>

      <Bookmarks>
        <AppsIcon>
          <span />
          <span />
          <span />
          <span />
        </AppsIcon>
        <BarSep $m="0 18px 0 19px" />
        {bookmarks.map(b => (
          <Bookmark key={b.label} $w={b.w}>
            <BookmarkIcon>{b.icon}</BookmarkIcon>
            <span>{b.label}</span>
          </Bookmark>
        ))}
        <More>»</More>
        <BarSep $m="0 19px 0 0" />
        <AllBookmarks>
          <BookmarkFolder />
          <span>All Bookmarks</span>
        </AllBookmarks>
      </Bookmarks>

      <Main>
        <Sidebar>
          <SideTop>
            <SidebarLogo />
            <SideActions>
              <Search size={31} strokeWidth={2} />
              <SquarePen size={30} strokeWidth={2} />
            </SideActions>
          </SideTop>
          <SideNav>
            <SideLabel $top={29} $bottom={5}>
              Projects
            </SideLabel>
            <SideRow>
              <ProjectFolder />
              DataAnalysis
            </SideRow>
            <SideRow>
              <ProjectFolder />
              software
            </SideRow>
            <SideLabel $top={43} $bottom={9}>
              Today
            </SideLabel>
            {today.map(t => (
              <ChatRow key={t}>
                <ChatTitle>{t}</ChatTitle>
              </ChatRow>
            ))}
            <ChatRow $active>
              <ChatTitle>Expanding Binomial Expression</ChatTitle>
              <RowMenu>
                <MoreHorizontal size={24} strokeWidth={2.6} />
              </RowMenu>
            </ChatRow>
            <SideLabel $top={44} $bottom={8}>
              Yesterday
            </SideLabel>
            {yesterday.map(t => (
              <ChatRow key={t}>
                <ChatTitle>{t}</ChatTitle>
              </ChatRow>
            ))}
            <SideLabel $top={43} $bottom={9}>
              Previous 7 Days
            </SideLabel>
            <ChatRow>
              <ChatTitle>Critical Section in OS</ChatTitle>
            </ChatRow>
          </SideNav>
          <SideFooter>
            <PlanBadge>
              <PlanIcon />
            </PlanBadge>
            <div>
              <PlanTitle>View plans</PlanTitle>
              <PlanSub>Unlimited access, team featur...</PlanSub>
            </div>
          </SideFooter>
          <ScrollArrow $pos="left: 342px; top: 6px;" $color="#4a4a4a" />
          <ScrollThumb $pos="left: 343px; top: 133px; width: 11px; height: 416px;" $color="#454545" />
          <ScrollArrow $down $pos="left: 342px; bottom: 6px;" $color="#4a4a4a" />
        </Sidebar>

        <Content>
          <Header>
            <ModelName>
              <span>
                ChatGPT <em>4o</em>
              </span>
              <ChevronDown size={20} color="#b4b4b4" />
            </ModelName>
            <ShareButton>
              <ShareIcon />
              Share
            </ShareButton>
            <HeaderMenu>
              <EllipsisVertical size={24} strokeWidth={2.8} />
            </HeaderMenu>
            <Avatar>
              MA
              <PlusBadge>PLUS</PlusBadge>
            </Avatar>
          </Header>
          <Column>
            <Thread>
              <Bubble>
                can I say that E(4x+2) = to 4E(x) +2 and substitute E(x) by expected
                <br />
                value ?
              </Bubble>
              <Para $top={62}>
                Yes! You are <b>100% correct</b>
                <CheckEmoji width="24" height="24" viewBox="0 0 24 24">
                  <rect x="1" y="1" width="22" height="22" rx="2.500" fill="#3fb950" />
                  <path d="M6 12.500 10.500 17 18 7.500" stroke="#fff" strokeWidth="2.600" fill="none" />
                </CheckEmoji>
              </Para>
              <Para $top={17}>
                This is a <b>property of expectation</b> called <b>linearity</b>, and it works exactly as you said:
              </Para>
              <Rule />
              <Heading>
                <Diamond />
                Property:
              </Heading>
              <Formula>
                <MathText>E</MathText>
                <MathText $up>(</MathText>
                <MathText>aX</MathText>
                <MathText $up> + </MathText>
                <MathText>b</MathText>
                <MathText $up>) = </MathText>
                <MathText>a</MathText>
                <MathText $up> · </MathText>
                <MathText>E</MathText>
                <MathText $up>(</MathText>
                <MathText>X</MathText>
                <MathText $up>) + </MathText>
                <MathText>b</MathText>
              </Formula>
              <Para $top={22}>Where:</Para>
              <List>
                <Item>
                  <MathText $size="25px">a</MathText>
                  <MathText $up $size="25px">, </MathText>
                  <MathText $size="25px">b</MathText> are constants
                </Item>
                <Item>
                  <MathText $size="34px">E</MathText>
                  <MathText $up $size="34px">(</MathText>
                  <MathText $size="34px">X</MathText>
                  <MathText $up $size="34px">)</MathText> is the expected value of the random variable <MathText $size="32px" $ml={6}>X</MathText>
                </Item>
              </List>
            </Thread>
            <Composer>
              <Attachment>
                <Ring />
                <RemoveBadge>
                  <X size={15} strokeWidth={3.2} />
                </RemoveBadge>
              </Attachment>
              <Prompt>
                I <Typo>dont</Typo> know if this is <Typo>poisson</Typo> exercise
              </Prompt>
              <ComposerBar>
                <AddSlot>
                  <Plus size={28} strokeWidth={1.8} />
                </AddSlot>
                <ToolsButton>
                  <ToolsIcon />
                  Tools
                </ToolsButton>
                <MicSlot>
                  <Mic size={23} strokeWidth={2} />
                </MicSlot>
                <SendButton>
                  <ArrowUp size={26} strokeWidth={2.2} />
                </SendButton>
              </ComposerBar>
            </Composer>
            <Disclaimer>ChatGPT can make mistakes. Check important info.</Disclaimer>
          </Column>
          <ScrollDown>
            <ArrowDown size={24} strokeWidth={2} />
          </ScrollDown>
          <ScrollArrow $pos="right: 4px; top: 84px;" $color="#4a4a4a" />
          <ScrollThumb $pos="right: 5px; top: 636px; width: 10px; height: 34px;" $color="#4d4d4d" />
          <ScrollArrow $down $pos="right: 4px; top: 720px;" $color="#4a4a4a" />
        </Content>
      </Main>

      <Taskbar>
        <Weather>
          <Cloud />
          <WeatherBadge>3</WeatherBadge>
          <WeatherText>
            24°C
            <span>مشمس جزئيًا</span>
          </WeatherText>
        </Weather>
        <TaskSlot $w={54}>
          <Start />
        </TaskSlot>
        <SearchPill>
          <Search size={22} strokeWidth={2} color="#222" />
          <SearchText>Search</SearchText>
          <Baobabs />
        </SearchPill>
        <TaskSlot>
          <TaskView />
        </TaskSlot>
        <TaskSlot>
          <Twitch />
        </TaskSlot>
        <TaskSlot>
          <Copilot />
        </TaskSlot>
        <TaskSlot>
          <Explorer />
        </TaskSlot>
        <TaskSlot>
          <Edge />
        </TaskSlot>
        <TaskSlot>
          <Store />
        </TaskSlot>
        <TaskSlot>
          <Youtube size={30} />
        </TaskSlot>
        <TaskSlot>
          <Alexa />
        </TaskSlot>
        <TaskSlot>
          <McAfee />
        </TaskSlot>
        <TaskSlot>
          <Outlook />
        </TaskSlot>
        <TaskSlot>
          <ActiveBack />
          <ChromeBall />
          <TaskBadge $color="#e8710a">m</TaskBadge>
          <TaskBar $w={20} $color="#0a6cd6" />
        </TaskSlot>
        <TaskSlot>
          <Wiki>W</Wiki>
        </TaskSlot>
        <TaskSlot>
          <Teams />
          <TaskBadge $color="#13a10e">✓</TaskBadge>
          <TaskBar $w={8} $color="#7b7f86" />
        </TaskSlot>
        <Tray>
          <TraySlot $w={40}>
            <ChevronUp size={22} strokeWidth={2} />
          </TraySlot>
          <TraySlot $w={60} $pr={5}>ENG</TraySlot>
          <TraySlot $w={30}>
            <Wifi size={20} strokeWidth={2} />
          </TraySlot>
          <TraySlot $w={30}>
            <Volume2 size={20} strokeWidth={1.6} />
          </TraySlot>
          <TraySlot $w={30}>
            <Battery />
          </TraySlot>
          <Clock>
            5:49 PM
            <br />
            5/22/2025
          </Clock>
        </Tray>
      </Taskbar>
    </Page>
  );
}
